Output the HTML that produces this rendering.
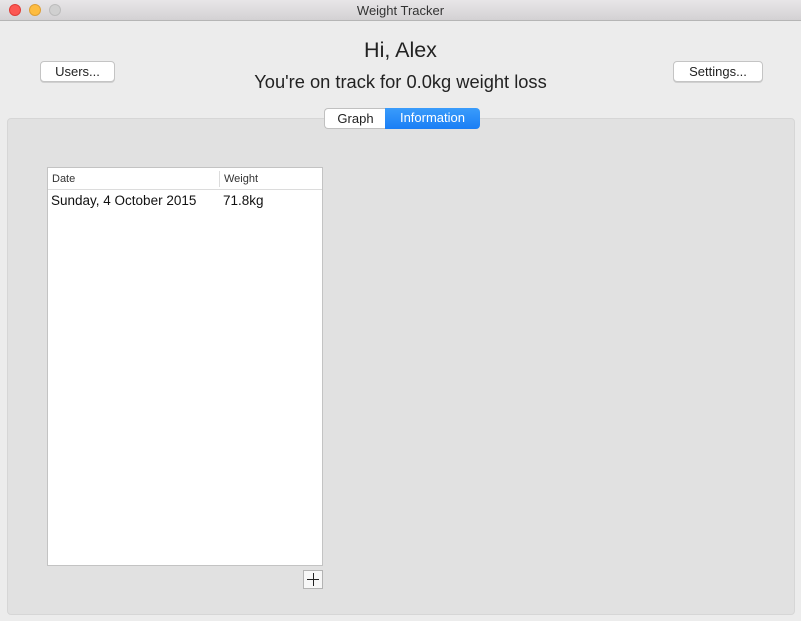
<!DOCTYPE html>
<html><head><meta charset="utf-8"><style>
*{box-sizing:border-box;margin:0;padding:0}
body{width:801px;height:621px;background:#ececec;font-family:"Liberation Sans",sans-serif;position:relative;overflow:hidden;color:#222}
.tb{position:absolute;left:0;top:0;width:801px;height:21px;background:linear-gradient(#e8e6e8,#d3d1d3);border-bottom:1px solid #b5b5b5;text-align:center;font-size:13px;line-height:21px;color:#333}
.dot{position:absolute;top:4px;width:12px;height:12px;border-radius:50%}
.btn{position:absolute;height:21px;background:#fff;border:1px solid #c4c4c4;border-radius:4px;font-size:13px;text-align:center;line-height:19px;box-shadow:0 1px 0 #d0d0d0}
.panel{position:absolute;left:7px;top:118px;width:788px;height:497px;background:#e1e1e1;border:1px solid #d6d6d6;border-radius:4px}
.seg{position:absolute;top:108px;height:21px;font-size:13px;line-height:20px;text-align:center}
.table{position:absolute;left:47px;top:167px;width:276px;height:399px;background:#fff;border:1px solid #c3c3c3}
</style></head><body>
<div class="tb">Weight Tracker
<div class="dot" style="left:9px;background:#fc5753;border:1px solid #df3d38"></div>
<div class="dot" style="left:29px;background:#fdbc40;border:1px solid #de9f34"></div>
<div class="dot" style="left:49px;background:#d0d0d0;border:1px solid #bcbcbc"></div>
</div>
<div style="position:absolute;top:38px;width:801px;text-align:center;font-size:21.5px;color:#222">Hi, Alex</div>
<div style="position:absolute;top:71px;width:801px;text-align:center;font-size:18.3px;color:#222">You're on track for 0.0kg weight loss</div>
<div class="btn" style="left:40px;top:61px;width:75px">Users...</div>
<div class="btn" style="left:673px;top:61px;width:90px">Settings...</div>
<div class="panel"></div>
<div class="seg" style="left:324px;width:62px;background:#fff;border:1px solid #c0c0c0;border-right:none;border-radius:4px 0 0 4px">Graph</div>
<div class="seg" style="left:385px;width:95px;background:linear-gradient(#3a9cfb,#1a7ef5);color:#fff;border-radius:0 4px 4px 0">Information</div>
<div class="table">
<div style="height:22px;border-bottom:1px solid #dcdcdc;font-size:11px;line-height:23px;color:#333;position:relative">
<span style="position:absolute;left:4px">Date</span>
<span style="position:absolute;left:171px;top:3px;height:16px;border-left:1px solid #dcdcdc"></span>
<span style="position:absolute;left:176px">Weight</span></div>
<div style="position:relative;height:22px;font-size:13.5px;line-height:22px;color:#111">
<span style="position:absolute;left:3px">Sunday, 4 October 2015</span>
<span style="position:absolute;left:175px">71.8kg</span></div>
</div>
<div style="position:absolute;left:303px;top:570px;width:20px;height:19px;background:#f7f7f7;border:1px solid #b3b3b3">
<div style="position:absolute;left:3px;top:8px;width:12px;height:1px;background:#222"></div>
<div style="position:absolute;left:9px;top:2px;width:1px;height:13px;background:#222"></div>
</div>
</body></html>
